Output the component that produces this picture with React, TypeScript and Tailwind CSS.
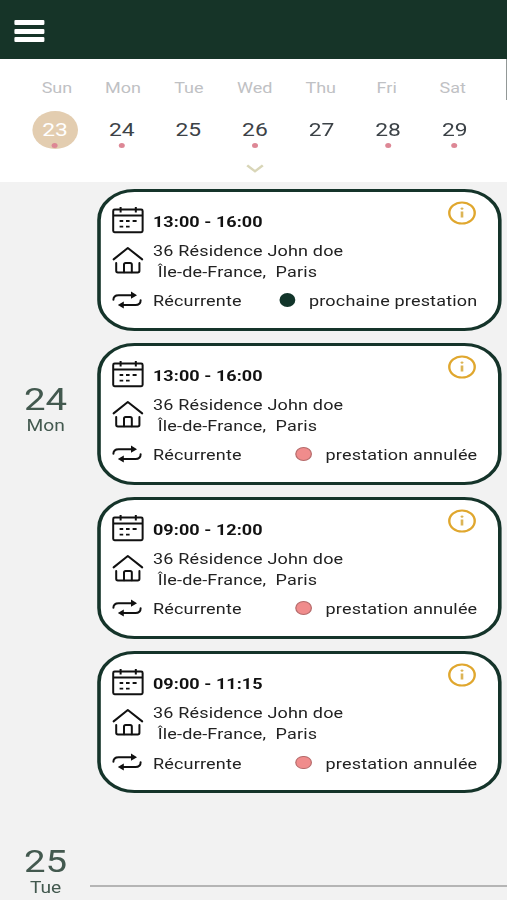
import React from 'react';

type Status = 'next' | 'cancelled';

interface Booking {
  time: string;
  status: Status;
}

interface Day {
  name: string;
  date: number;
  marked: boolean;
}

const week: Day[] = [
  { name: 'Sun', date: 23, marked: true },
  { name: 'Mon', date: 24, marked: true },
  { name: 'Tue', date: 25, marked: false },
  { name: 'Wed', date: 26, marked: true },
  { name: 'Thu', date: 27, marked: false },
  { name: 'Fri', date: 28, marked: true },
  { name: 'Sat', date: 29, marked: true },
];

const bookings: Booking[] = [
  { time: '13:00 - 16:00', status: 'next' },
  { time: '13:00 - 16:00', status: 'cancelled' },
  { time: '09:00 - 12:00', status: 'cancelled' },
  { time: '09:00 - 11:15', status: 'cancelled' },
];

const CalendarIcon = () => (
  <svg
    className="h-[28px] w-[26.7px]"
    viewBox="0 0 32 28"
    preserveAspectRatio="none"
    fill="none"
    stroke="#111"
    strokeWidth="2"
  >
    <rect x="1.6" y="3.6" width="29.4" height="22.6" rx="1.4" />
    <path d="M1.6 9.4H31M9 1v5.4M24.2 1v5.4" />
    <path d="M8 15h3.6M14.4 15h3.6M21 15h4M8 20.6h3.6M14.4 20.6h3.6" strokeWidth="1.8" />
  </svg>
);

const HomeIcon = () => (
  <svg
    className="h-[28px] w-[26.7px]"
    viewBox="0 0 32 28"
    preserveAspectRatio="none"
    fill="none"
    stroke="#111"
    strokeWidth="2"
    strokeLinecap="round"
    strokeLinejoin="round"
  >
    <path d="M2 13.4 16.2 2 30.6 13.4" />
    <path d="M4.6 17v7.8q0 1.6 1.7 1.6h19.8q1.7 0 1.7-1.6V17" />
    <path d="M12.4 26.2v-7.6q0-1.6 1.6-1.6h4.6q1.6 0 1.6 1.6v7.6" />
  </svg>
);

const RepeatIcon = () => (
  <svg
    className="h-[18px] w-[26.7px]"
    viewBox="0 0 32 18"
    preserveAspectRatio="none"
    fill="none"
    stroke="#111"
    strokeWidth="2"
    strokeLinecap="round"
  >
    <path d="M1.8 8.8q0-4.6 5.2-4.6h15" />
    <path d="M29 9.2q0 4.8-5.2 4.8H10" />
    <path d="M19.4 .6 25.4 4.2 19.4 7.8zM12.2 10.4 6.2 14l6 3.6z" fill="#111" stroke="none" />
  </svg>
);

const InfoIcon = () => (
  <svg className="mr-[0.6px] h-[24px] w-[24px]" viewBox="0 0 24 24" fill="none">
    <circle cx="12" cy="12" r="10.6" stroke="#e0a72e" strokeWidth="2" />
    <path d="M12 10.6v6" stroke="#dcb455" strokeWidth="2.2" />
    <circle cx="12" cy="7.6" r="1.2" fill="#dcb455" />
  </svg>
);

const BookingCard = ({ time, status }: Booking) => (
  <div className="flex h-[142px] w-[337px] flex-col rounded-[31px] border-[3px] border-[#15342a] bg-white pl-[9.4px] pr-[17px] pt-[9px]">
    <div className="flex h-[39px] items-start justify-between">
      <div className="flex items-center pt-[5px]">
        <div className="w-[34.3px]">
          <CalendarIcon />
        </div>
        <span className="pt-[4px] text-[15px] font-bold tracking-[0.05px] text-[#111]">{time}</span>
      </div>
      <InfoIcon />
    </div>
    <div className="flex h-[42px] items-center pt-px">
      <div className="w-[34.3px] pb-[2.6px]">
        <HomeIcon />
      </div>
      <div className="flex flex-col whitespace-pre leading-[21px]">
        <span>36 Résidence John doe</span>
        <span> Île-de-France,  Paris</span>
      </div>
    </div>
    <div className="flex h-[36px] items-center justify-between">
      <div className="flex items-center">
        <div className="w-[34.3px]">
          <RepeatIcon />
        </div>
        <span className="pt-[3px]">Récurrente</span>
      </div>
      <div className="flex items-center gap-[11.5px]">
        {status === 'next' ? (
          <span className="h-[13.4px] w-[13.4px] rounded-full bg-[#12352a]" />
        ) : (
          <span className="h-[13.4px] w-[13.4px] rounded-full border border-[#b56b6b] bg-[#f08c8c]" />
        )}
        <span className="pt-[3px]">{status === 'next' ? 'prochaine prestation' : 'prestation annulée'}</span>
      </div>
    </div>
  </div>
);

const DayLabel = ({ date, name }: { date: number; name: string }) => (
  <div className="flex w-[76px] flex-col items-center tracking-normal text-[#43594f]">
    <span className="text-[32px] leading-[33px]">{date}</span>
    <span className="text-[16px] leading-[20px]">{name}</span>
  </div>
);

export default function App() {
  return (
    <div className="h-[900px] w-[507px] overflow-hidden bg-[#f2f2f2]">
      <div className="flex h-[900px] w-[422.5px] origin-left scale-x-[1.2] flex-col font-[Roboto,sans-serif] text-[15px] tracking-[0.15px] text-[#222]">
        <header className="flex h-[59px] shrink-0 items-center bg-[#163428] pl-[12.2px] pt-[3px]">
          <div className="flex w-[24.5px] flex-col gap-[3.4px]">
            <span className="h-[5px] rounded-[1px] bg-white" />
            <span className="h-[5px] rounded-[1px] bg-white" />
            <span className="h-[5px] rounded-[1px] bg-white" />
          </div>
        </header>

        <section className="flex h-[123px] shrink-0 justify-between bg-white">
          <div className="flex flex-col pt-[19px] tracking-normal">
            <div className="ml-[20px] grid w-[384.7px] grid-cols-7">
              {week.map((day) => (
                <span key={day.name} className="text-center text-[15px] leading-[20px] text-[#bfc1c4]">
                  {day.name}
                </span>
              ))}
            </div>
            <div className="ml-[18.2px] mt-[13px] grid w-[388.5px] grid-cols-7">
              {week.map((day, i) => (
                <div key={day.date} className="flex flex-col items-center">
                  <div
                    className={`flex h-[38px] w-[38px] flex-col items-center rounded-full pt-[8px] ${
                      i === 0 ? 'bg-[#e3cdb0] text-white' : 'text-[#3c4247]'
                    }`}
                  >
                    <span className="text-[19px] leading-[22px]">{day.date}</span>
                    {day.marked && <span className="mt-[2px] h-[5px] w-[5px] rounded-full bg-[#dd8795]" />}
                  </div>
                  {day.name === 'Wed' && (
                    <svg className="mt-[14.5px] h-[9px] w-[15px]" viewBox="0 0 15 9" fill="none">
                      <path d="M1 1.4 7.5 7.2 14 1.4" stroke="#d9d6b8" strokeWidth="2.2" />
                    </svg>
                  )}
                </div>
              ))}
            </div>
          </div>
          <span className="h-[41px] w-[1px] bg-[#4b5553]" />
        </section>

        <main className="flex flex-col pt-[7px]">
          <div className="flex">
            <div className="w-[80.8px] shrink-0 pt-[194px]">
              <DayLabel date={24} name="Mon" />
            </div>
            <div className="flex flex-col gap-[12.1px]">
              {bookings.map((booking, i) => (
                <BookingCard key={i} {...booking} />
              ))}
            </div>
          </div>
          <div className="mt-[51.7px] flex items-end">
            <DayLabel date={25} name="Tue" />
            <span className="-ml-px mb-[11px] h-[1.5px] grow bg-[#b5b5b5]" />
          </div>
        </main>
      </div>
    </div>
  );
}
